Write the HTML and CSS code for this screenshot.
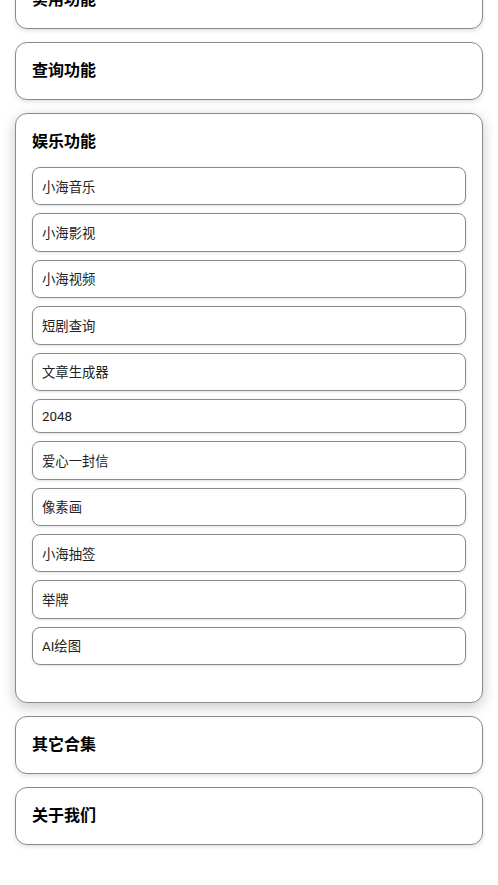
FILE: index.html
```html
<!DOCTYPE html>
<html lang="zh-CN">
<head>
    <meta charset="UTF-8">
    <meta name="viewport" content="width=device-width, initial-scale=1.0">
    <title>小海工具箱</title>
    <link rel="stylesheet" href="styles.css">
</head>
<body>
    <div class="container">
        <div class="section">
            <h3>实用功能</h3>
        </div>
        <div class="section">
            <h3>查询功能</h3>
        </div>
        <div class="section open">
            <h3>娱乐功能</h3>
            <div class="list">
                <div class="item">小海音乐</div>
                <div class="item">小海影视</div>
                <div class="item">小海视频</div>
                <div class="item">短剧查询</div>
                <div class="item">文章生成器</div>
                <div class="item">2048</div>
                <div class="item">爱心一封信</div>
                <div class="item">像素画</div>
                <div class="item">小海抽签</div>
                <div class="item">举牌</div>
                <div class="item">AI绘图</div>
            </div>
        </div>
        <div class="section">
            <h3>其它合集</h3>
        </div>
        <div class="section">
            <h3>关于我们</h3>
        </div>
    </div>
</body>
</html>
```

FILE: styles.css
```css
body {
    margin: 0;
    font-family: Roboto, "Noto Sans CJK SC", sans-serif;
    background-color: #fff;
    color: #111;
}
.container {
    margin-top: -29px;
    padding: 0 15px 40px;
    display: flex;
    flex-direction: column;
    gap: 13px;
}
.section {
    border: 1px solid #8a8a8a;
    border-radius: 12px;
    padding: 16px;
    background-color: #fff;
    box-shadow: 0 2px 4px rgba(0, 0, 0, 0.12);
}
.section.open {
    box-shadow: 0 4px 14px rgba(0, 0, 0, 0.22);
}
.section h3 {
    margin: 0;
    font-size: 16px;
    line-height: 24px;
    font-weight: bold;
    color: #000;
}
.list {
    margin: 13px 0 21px;
    display: flex;
    flex-direction: column;
    gap: 8px;
}
.item {
    border: 1px solid #8a8a8a;
    border-radius: 8px;
    padding: 8.7px 9px;
    font-size: 13.33px;
    color: #222;
    box-shadow: 0 1px 3px rgba(0, 0, 0, 0.12);
}
```
